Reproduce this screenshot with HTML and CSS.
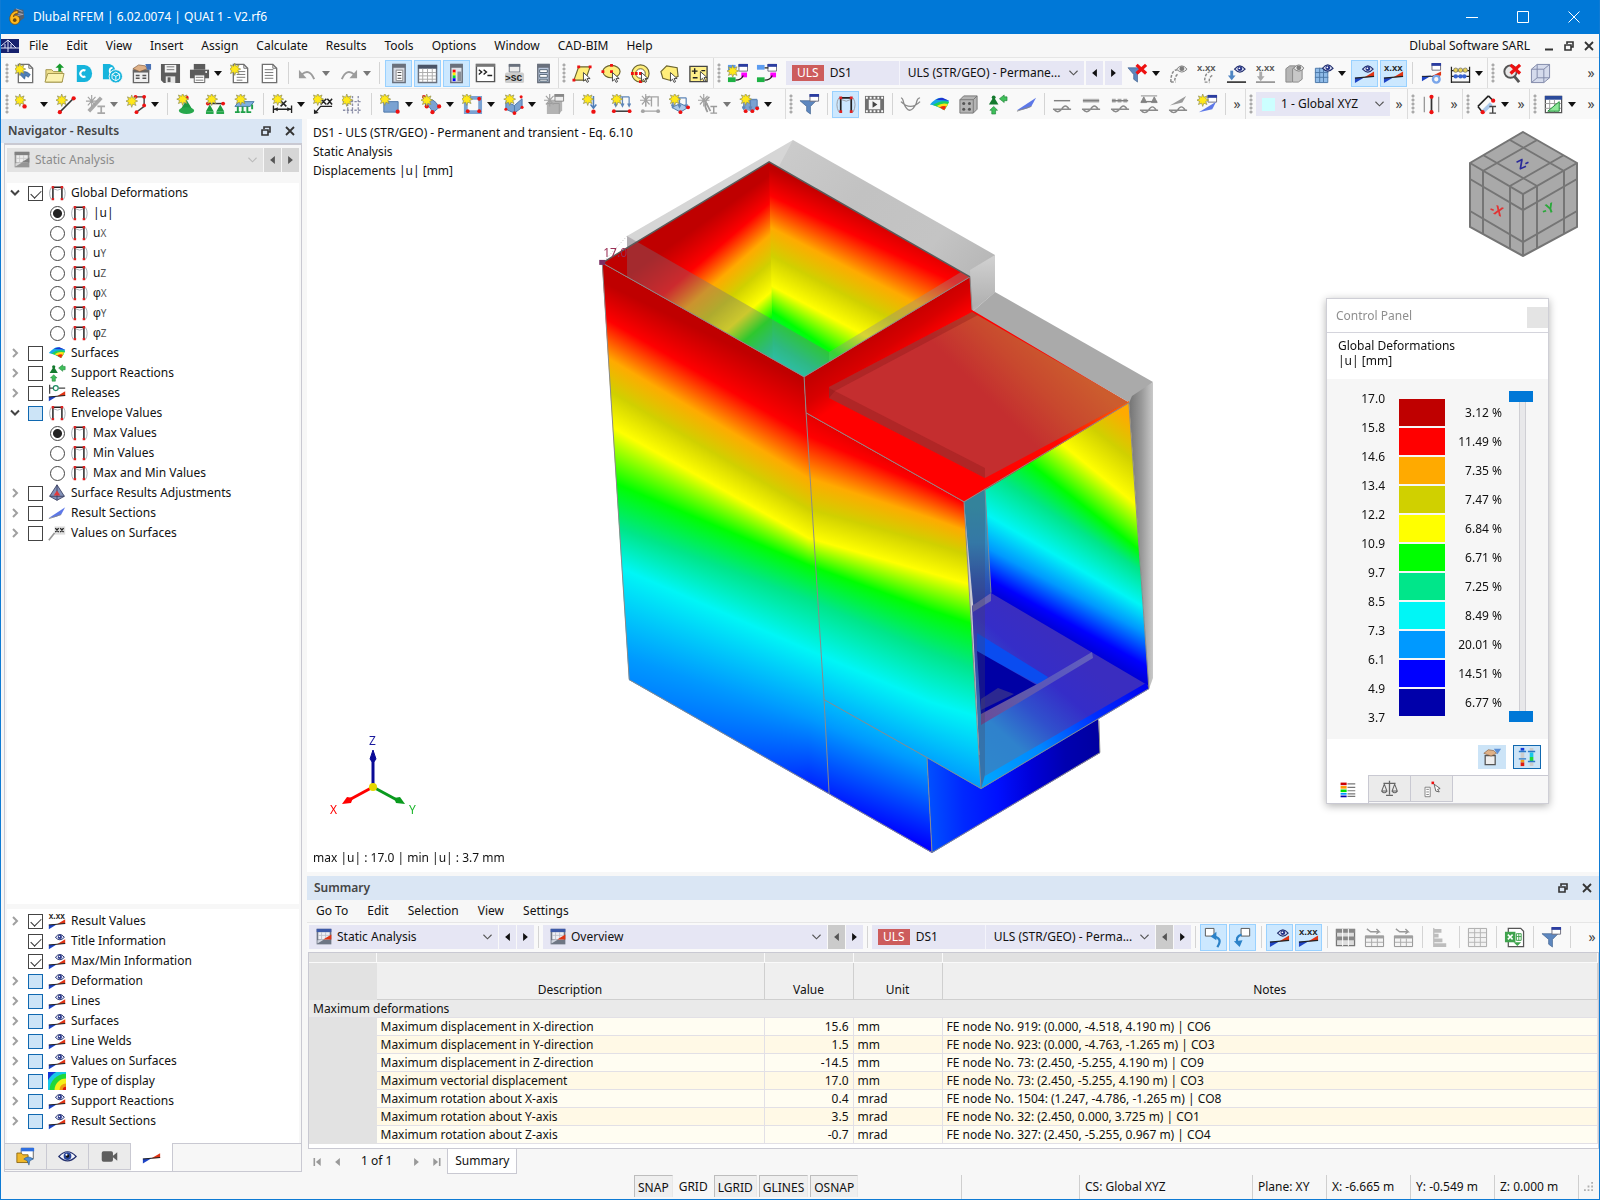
FILE: index.html
```html
<!DOCTYPE html>
<html lang="en">
<head>
<meta charset="utf-8">
<title>Dlubal RFEM | 6.02.0074 | QUAI 1 - V2.rf6</title>
<link rel="stylesheet" href="styles.css">
</head>
<body>
<svg class="defs" aria-hidden="true">
<defs>
<g id="star"><path d="M6 0l1.200 3.400L10.500 2 9.200 5l3 1.400-3 1.400 1.300 3.200-3.300-1.400L6 13 4.800 9.600 1.500 11l1.300-3.200-3-1.400 3-1.400L1.500 2l3.300 1.400z" fill="#ffe81a" stroke="#8d8b55" stroke-width=".7"/></g>
<g id="starg"><path d="M6 0v13M0 6.500h12M2 2l8 9M10 2l-8 9" stroke="#a2a2a2" stroke-width="1.200"/></g>
<g id="eye"><path d="M0 4.500Q5.500-2.500 11 4.500 5.500 10.500 0 4.500z" fill="#dfe3f6" stroke="#23306e" stroke-width="1.200"/><circle cx="5.500" cy="4" r="2.500" fill="#27358a"/><circle cx="5" cy="3.500" r=".9" fill="#fff"/></g>
<g id="eyeg"><path d="M0 4.500Q5.500-2.500 11 4.500 5.500 10.500 0 4.500z" fill="#e8e8e8" stroke="#808080"/><circle cx="5.500" cy="4" r="2.500" fill="#7d7d7d"/></g>
<g id="diag"><path d="M1 21v-5.500l10-.5z" fill="#1d43c4"/><path d="M21 9v5.500l-10 .5z" fill="#e03414"/><path d="M1 15.800L21 14" stroke="#222" stroke-width="1.300"/></g>
<g id="win"><path d="M.5.500h9v7h-9z" fill="#fff" stroke="#6f6f7f"/><path d="M0 0h10v3H0z" fill="#2b3da0"/></g>
<g id="wing"><path d="M.5.500h9v7h-9z" fill="#eee" stroke="#888"/><path d="M0 0h10v3H0z" fill="#888"/></g>
<g id="ptr"><path d="M0 0v9l2.200-2 1.600 3.300 1.600-.8-1.600-3.200H7z" fill="#fff" stroke="#333" stroke-width=".9"/></g>
<g id="wave"><path d="M2 8h17" stroke="#808080" stroke-width="1.500"/><path d="M1 17h19M2 17q4 5 8 0 4-7 8 0" fill="none" stroke="#8a8a8a" stroke-width="1.500"/></g>
<g id="page"><path d="M3.500 1.500h11l4 4v15h-15z" fill="#fff" stroke="#707070" stroke-width="1.400"/><path d="M14.500 1.500v4h4" fill="none" stroke="#707070"/></g>
<g id="arrows"><path d="M3 3v9M10 3v9M17 3v9M3 3h14M1.500 10L3 13l1.500-3M8.500 10L10 13l1.500-3M15.500 10l1.500 3 1.500-3" fill="none" stroke="#5f86b8" stroke-width="1.300"/></g>
</defs>
<symbol id="logo" viewBox="0 0 22 22"><path d="M8 2l10 1 1 9-8 6-7-6z" fill="#55606e"/><path d="M10 2l7 3M8 6l9 2M8 10l10-2" stroke="#aab" stroke-width="1"/><path d="M12 4C6 4 3 9 3 13c0 8 11 8 11 1 0-5-6-6-7-3 0-3 2-4 5-4z" fill="#ffb81c" stroke="#7a4a00" stroke-width=".8"/><circle cx="8.500" cy="14.500" r="2" fill="#6b4a10"/></symbol>
<symbol id="bridge" viewBox="0 0 18 14"><path d="M0 0h18v14H0z" fill="#16216e"/><path d="M0 9h18M7 1v12M0 7L7 1l8 8M4 9V5M10 9V5" stroke="#dfe4f7" stroke-width="1" fill="none"/></symbol>
<symbol id="newmodel" viewBox="0 0 22 22"><use href="#page"/><path d="M5 12q5-6 11 0l-2 3-3-2-1 4-3-3z" fill="#4f7fb8" stroke="#23507e" stroke-width=".6"/><use href="#star" x="-1" y="0"/></symbol>
<symbol id="open" viewBox="0 0 22 22"><path d="M2 20V7h6l2 2h9v11z" fill="#efe08e" stroke="#a4964a"/><path d="M1 20l3-9h17l-2 9z" fill="#fbf2b0" stroke="#a4964a"/><path d="M15 9V5h-3l4.500-4.500L21 5h-3v4z" fill="#179a2c"/></symbol>
<symbol id="dc" viewBox="0 0 22 22"><path d="M4 2h8a8 9 0 010 18H4z" fill="#16b4dc"/><path d="M13 8a3.500 3.500 0 100 6" fill="none" stroke="#fff" stroke-width="2.200"/></symbol>
<symbol id="dcg" viewBox="0 0 22 22"><path d="M1 1h7q6 2 6 8L8 17H1z" fill="#16b4dc"/><path d="M11 5a3 3 0 100 6" fill="none" stroke="#fff" stroke-width="1.800"/><circle cx="14.500" cy="14" r="7" fill="#16b4dc" stroke="#f7f7f7"/><path d="M14.500 9.500l4 2.300v4.500l-4 2.300-4-2.300v-4.500zM10.500 11.800l4 2.200 4-2.200M14.500 14v4.500" fill="none" stroke="#fff"/></symbol>
<symbol id="prefs" viewBox="0 0 22 22"><path d="M2.500 7.500h16v13h-16z" fill="#f0f0f0" stroke="#666" stroke-width="1.400"/><path d="M2 7h17v3H2z" fill="#666"/><path d="M5 13h4M5 16h4M12 13h4M12 16h4" stroke="#555" stroke-width="1.600"/><path d="M2 6l6-4 7 1 2 3-8 3z" fill="#dfb187" stroke="#80583a" stroke-width=".7"/><path d="M15 1h6v6h-4z" fill="#4a72b4"/></symbol>
<symbol id="save" viewBox="0 0 22 22"><path d="M1 1h20v20H4l-3-3z" fill="#5c5c5c"/><path d="M5 2h12v8H5z" fill="#f3f3f3"/><path d="M7 4h8M7 7h8" stroke="#777"/><path d="M6 14h10v7H6z" fill="#e6e6e6"/><path d="M8 15h3v5H8z" fill="#5c5c5c"/></symbol>
<symbol id="print" viewBox="0 0 22 22"><path d="M5 1h12v6H5z" fill="#5c5c5c"/><path d="M1 7h20v9H1z" fill="#5c5c5c"/><path d="M5.500 12.500h11v8h-11z" fill="#fff" stroke="#5c5c5c"/><path d="M7 15h8M7 18h8" stroke="#777"/><circle cx="18" cy="9.500" r="1" fill="#fff"/></symbol>
<symbol id="newrep" viewBox="0 0 22 22"><use href="#page"/><path d="M7 9h9M7 12h9M7 15h9M7 18h6" stroke="#777"/><use href="#star" x="-1" y="0"/></symbol>
<symbol id="doc" viewBox="0 0 22 22"><use href="#page"/><path d="M6 7h9M6 10h9M6 13h9M6 16h9" stroke="#777"/></symbol>
<symbol id="undo" viewBox="0 0 22 22"><path d="M5 12q8-7 13 5" fill="none" stroke="#9c9c9c" stroke-width="2"/><path d="M2 7v9h8z" fill="#9c9c9c"/></symbol>
<symbol id="redo" viewBox="0 0 22 22"><path d="M17 12Q9 5 4 17" fill="none" stroke="#9c9c9c" stroke-width="2"/><path d="M20 7v9h-8z" fill="#9c9c9c"/></symbol>
<symbol id="p1" viewBox="0 0 22 22"><path d="M5 1.500h13v19H5z" fill="#d5d9e2" stroke="#69707c" stroke-width="1.500"/><path d="M5 1h13v4H5z" fill="#69707c"/><path d="M8.500 7.500h7v11h-7z" fill="#fff" stroke="#888"/><path d="M10 10h4M10 13h4M10 16h4" stroke="#444"/></symbol>
<symbol id="p2" viewBox="0 0 22 22"><path d="M1.500 2.500h19v18h-19z" fill="#fff" stroke="#69707c" stroke-width="1.500"/><path d="M1 2h20v4H1z" fill="#4a5568"/><path d="M2 10h18M2 13.500h18M2 17h18M6 6v14M11 6v14M16 6v14" stroke="#aaa"/></symbol>
<symbol id="p3" viewBox="0 0 22 22"><path d="M5 1.500h12v19H5z" fill="#dfe3ea" stroke="#69707c" stroke-width="1.500"/><path d="M5 1h12v4H5z" fill="#69707c"/><path d="M7 7h3v3H7z" fill="#f00"/><path d="M7 10h3v3H7z" fill="#fe0"/><path d="M7 13h3v3H7z" fill="#0d3"/><path d="M7 16h3v3H7z" fill="#00f"/><path d="M12 9h4v10h-4z" fill="#8a8f98"/></symbol>
<symbol id="console" viewBox="0 0 22 22"><path d="M1.500 1.500h19v18h-19z" fill="#fff" stroke="#555" stroke-width="1.500"/><path d="M1 1h20v3H1z" fill="#777"/><path d="M4 7l3 2.500L4 12M9 7l3 2.500L9 12M13 13h5" fill="none" stroke="#222" stroke-width="1.500"/></symbol>
<symbol id="script" viewBox="0 0 22 22"><path d="M5.500 1.500h11v8h-11z" fill="#eee" stroke="#69707c"/><path d="M5 1h12v3H5z" fill="#69707c"/><rect x="1" y="10" width="20" height="11" rx="2" fill="#ccc"/><text x="1" y="19" font-family="Liberation Mono" font-weight="700" font-size="10" fill="#222">&gt;SC</text></symbol>
<symbol id="calcw" viewBox="0 0 22 22"><path d="M5 1.500h12v19H5z" fill="#b9c6dc" stroke="#69707c" stroke-width="1.500"/><path d="M5 1h12v4H5z" fill="#69707c"/><path d="M7 7h8v3H7zM7 12h8v3H7zM7 17h8v2H7z" fill="#fff" stroke="#567"/></symbol>
<symbol id="sel1" viewBox="0 0 22 22"><path d="M7 4h12l-5 14H2z" fill="#ffee7a" stroke="#6b6430" stroke-width="1.200"/><path d="M5.500 2.500h3v3h-3zM17.500 2.500h3v3h-3zM.5 16.500h3v3h-3z" fill="#e11"/><use href="#ptr" x="12" y="10"/></symbol>
<symbol id="sel2" viewBox="0 0 22 22"><ellipse cx="11" cy="9" rx="9" ry="6.500" fill="#ffee7a" stroke="#6b6430" stroke-width="1.200"/><path d="M9.500 1h3v3h-3zM.5 7.500h3v3h-3zM9.500 7.500h3v3h-3z" fill="#e11"/><use href="#ptr" x="12" y="10"/></symbol>
<symbol id="sel3" viewBox="0 0 22 22"><circle cx="11" cy="11" r="9" fill="#ffee7a" stroke="#6b6430" stroke-width="1.200"/><circle cx="11" cy="11" r="5" fill="#fff" stroke="#6b6430"/><path d="M1 9.500h3v3H1zM5 9.500h3v3H5zM9.500 9.500h3v3h-3zM9.500 18h3v3h-3z" fill="#e11"/><use href="#ptr" x="12" y="10"/></symbol>
<symbol id="sel4" viewBox="0 0 22 22"><path d="M2 9l6-6 11 2 1 9-9 4-7-2z" fill="#ffee7a" stroke="#6b6430" stroke-width="1.200"/><use href="#ptr" x="12" y="10"/></symbol>
<symbol id="sel5" viewBox="0 0 22 22"><path d="M2 3.500h18v16H2z" fill="#fff08a" stroke="#444" stroke-width="1.400"/><path d="M4 8.500h6M7 5.500v6M5 15.500h5M14 8h4" stroke="#222" stroke-width="1.500"/><use href="#ptr" x="13" y="9"/></symbol>
<symbol id="lc1" viewBox="0 0 22 22"><path d="M1 2h8v6H1z" fill="#5c9cf0"/><use href="#win" x="12" y="1"/><path d="M15 10h6v5h-6z" fill="#f0f"/><path d="M1 15h8v5H1z" fill="#1db244"/><path d="M9 18q6 0 8-5" fill="none" stroke="#222" stroke-width="1.300"/><use href="#star" x="0" y="2"/></symbol>
<symbol id="lc2" viewBox="0 0 22 22"><path d="M1 2h8v5H1z" fill="#5c9cf0"/><use href="#win" x="12" y="1"/><path d="M15 10h6v5h-6z" fill="#f0f"/><path d="M1 15h8v5H1z" fill="#1db244"/><path d="M9 18q6 0 8-5M9 5h4" fill="none" stroke="#222" stroke-width="1.300"/></symbol>
<symbol id="filtx" viewBox="0 0 22 22"><path d="M1 5h16l-6 7v8l-4-3v-5z" fill="#5d87bf" stroke="#42638f" stroke-width=".7"/><path d="M10 2l10 9M20 2l-10 9" stroke="#e11" stroke-width="3.400"/></symbol>
<symbol id="leye" viewBox="0 0 22 22"><path d="M10 7q-7 0-7 13M10 12q-3 2-3 8M3 20h5" fill="none" stroke="#8a8a8a" stroke-width="1.600" stroke-dasharray="3 1.500"/><use href="#eyeg" x="9" y="2"/></symbol>
<symbol id="lxx" viewBox="0 0 22 22"><text x="0" y="8" font-family="Liberation Sans" font-weight="700" font-size="10" fill="#555">x.xx</text><path d="M14 9q-6 1-6 11M16 13q-4 2-3 8M8 20h5" fill="none" stroke="#8a8a8a" stroke-width="1.500" stroke-dasharray="3 1.500"/></symbol>
<symbol id="seye" viewBox="0 0 22 22"><path d="M6 8v7" stroke="#4f86c4" stroke-width="3"/><path d="M2 13h8l-4 5z" fill="#4f86c4"/><path d="M1 20h20" stroke="#222" stroke-width="1.600"/><use href="#eye" x="9" y="2"/></symbol>
<symbol id="sxx" viewBox="0 0 22 22"><text x="1" y="8" font-family="Liberation Sans" font-weight="700" font-size="10" fill="#555">x.xx</text><path d="M6 9v6" stroke="#aaa" stroke-width="3"/><path d="M2 14h8l-4 5z" fill="#aaa"/><path d="M1 20h20" stroke="#888" stroke-width="1.600"/></symbol>
<symbol id="soleye" viewBox="0 0 22 22"><path d="M2 6l4-3h6v15l-4 2H2z" fill="#b5b5b5" stroke="#888"/><path d="M9 6l4-2h6v13l-4 3H9z" fill="#c8c8c8" stroke="#888"/><use href="#eyeg" x="10" y="1"/></symbol>
<symbol id="gridi" viewBox="0 0 22 22"><path d="M2.500 5.500h13v15h-13z" fill="#8fbbe8" stroke="#4c78a8"/><path d="M7 5v15M11 5v15M2 10h14M2 15h14" stroke="#4c78a8"/><use href="#eye" x="10" y="1"/></symbol>
<symbol id="reye" viewBox="0 0 22 22"><use href="#diag"/><use href="#eye" x="9" y="2"/></symbol>
<symbol id="rxx" viewBox="0 0 22 22"><use href="#diag"/><text x="1" y="8" font-family="Liberation Sans" font-weight="700" font-size="10" fill="#222">x.xx</text></symbol>
<symbol id="rset" viewBox="0 0 22 22"><path d="M1 19v-5l10-1z" fill="#1d43c4"/><path d="M21 9v4l-10 1z" fill="#e03414"/><path d="M1 14h19" stroke="#222"/><use href="#win" x="11" y="0"/><circle cx="16" cy="17" r="3.500" fill="none" stroke="#7aa6ea" stroke-width="2.500"/></symbol>
<symbol id="abacus" viewBox="0 0 22 22"><path d="M1.500 4v17M20.500 4v17M1 8h20M1 14h20M1 20h20" stroke="#222" stroke-width="1.300"/><g fill="#e8d25a" stroke="#555" stroke-width=".6"><circle cx="6" cy="7.500" r="2.300"/><circle cx="11" cy="7.500" r="2.300"/><circle cx="16" cy="7.500" r="2.300"/></g><g fill="#3a64d0"><circle cx="6" cy="14" r="2.300"/><circle cx="11" cy="14" r="2.300"/><circle cx="15" cy="14" r="2.300"/></g></symbol>
<symbol id="zoomx" viewBox="0 0 22 22"><circle cx="10" cy="9" r="6.500" fill="#e8e8e8" stroke="#555" stroke-width="2"/><path d="M14 14l5 6" stroke="#555" stroke-width="3"/><path d="M10 2l10 9M20 2l-10 9" stroke="#e11" stroke-width="3.400"/></symbol>
<symbol id="cubei" viewBox="0 0 22 22"><path d="M1.500 6.500l6-5h13v14l-6 5h-13z" fill="#d5dbec" stroke="#8088a8"/><path d="M1.500 6.500h13v14M14.500 6.500l6-5M7.500 1.500v14h13M7.500 15.500l-6 5" fill="none" stroke="#8088a8"/></symbol>
<symbol id="node" viewBox="0 0 22 22"><use href="#star" x="-1" y="0"/><circle cx="10" cy="13" r="2.300" fill="#e11"/></symbol>
<symbol id="line" viewBox="0 0 22 22"><path d="M4 19L19 4" stroke="#333" stroke-width="1.600"/><circle cx="4" cy="19" r="2.200" fill="#e11"/><circle cx="18.500" cy="4.500" r="2.200" fill="#e11"/><use href="#star" x="0" y="0"/></symbol>
<symbol id="member" viewBox="0 0 22 22"><path d="M4 18L17 4" stroke="#a8a8a8" stroke-width="4"/><path d="M13 13h8M13 20h8M17 13v7" stroke="#a8a8a8" stroke-width="1.800"/><use href="#starg" x="1" y="1"/></symbol>
<symbol id="poly" viewBox="0 0 22 22"><path d="M9 3h10v10l-8 6" fill="none" stroke="#444" stroke-width="1.500"/><g fill="#e11"><circle cx="10" cy="3" r="2"/><circle cx="19" cy="3" r="2"/><circle cx="19" cy="12" r="2"/><circle cx="11" cy="19" r="2"/></g><use href="#star" x="0" y="1"/></symbol>
<symbol id="nsup" viewBox="0 0 22 22"><path d="M11 6l6 10H5z" fill="#1c9a40"/><ellipse cx="11" cy="17.500" rx="8" ry="3.500" fill="#27a84c"/><circle cx="11" cy="4" r="2.300" fill="#e11"/><use href="#star" x="1" y="-1"/></symbol>
<symbol id="lsup" viewBox="0 0 22 22"><path d="M5 11l4 7H1zM16 11l4 7h-8z" fill="#1c9a40"/><path d="M1 19.500h8M12 19.500h8" stroke="#27a84c" stroke-width="3"/><path d="M2 10h17" stroke="#333" stroke-width="1.500"/><circle cx="3" cy="10" r="2" fill="#e11"/><circle cx="19" cy="10" r="2" fill="#e11"/><use href="#star" x="1" y="-1"/></symbol>
<symbol id="ssup" viewBox="0 0 22 22"><path d="M5 8h16l-4 5H1z" fill="#7fb0e0" stroke="#4878a8"/><path d="M4 13v5M9 13v5M14 13v5M19 11v5M1 19h5M7 19h5M13 19h5" stroke="#1fa048" stroke-width="2"/><use href="#star" x="1" y="-1"/></symbol>
<symbol id="dim" viewBox="0 0 22 22"><path d="M1.500 12v8M20.500 12v8M2 16h18" stroke="#222" stroke-width="1.400"/><path d="M2 16l4-2v4zM20 16l-4-2v4z" fill="#222"/><path d="M9 7l6 6M15 7l-6 6" stroke="#222" stroke-width="1.600"/><use href="#star" x="0" y="-1"/></symbol>
<symbol id="dimxx" viewBox="0 0 22 22"><path d="M20 13H8l-5 6" fill="none" stroke="#222" stroke-width="1.300"/><path d="M1 21v-5l5 4z" fill="#222"/><path d="M8 5l6 6M14 5l-6 6M15 5l5 6M20 5l-5 6" stroke="#222" stroke-width="1.600"/><use href="#star" x="-1" y="-1"/></symbol>
<symbol id="grid" viewBox="0 0 22 22"><path d="M1 8h20M1 17h20M6 2v20M17 2v20M11 2v20" stroke="#8c8fa8" stroke-width="1.400" stroke-dasharray="2.500 1.500"/><use href="#star" x="-1" y="0"/></symbol>
<symbol id="surf" viewBox="0 0 22 22"><path d="M4 8h15v11H4z" fill="#7aa2d2" stroke="#4d77aa"/><circle cx="18.500" cy="18.500" r="2.200" fill="#e11"/><use href="#star" x="-1" y="-1"/></symbol>
<symbol id="surfc" viewBox="0 0 22 22"><path d="M4 7q9-5 15 7l-7 6Q10 12 5 13z" fill="#7aa2d2" stroke="#4d77aa"/><g fill="#e11"><circle cx="19" cy="13" r="2.200"/><circle cx="12" cy="19" r="2.200"/><circle cx="6" cy="13" r="2.200"/><circle cx="3" cy="3" r="2"/></g><use href="#star" x="0" y="0"/></symbol>
<symbol id="opening" viewBox="0 0 22 22"><path d="M4 4h15v15H4z" fill="none" stroke="#7aa2d2" stroke-width="4"/><g fill="#e11"><circle cx="18" cy="5" r="2"/><circle cx="6" cy="18" r="2"/><circle cx="18" cy="18" r="2"/></g><use href="#star" x="-1" y="-1"/></symbol>
<symbol id="solid" viewBox="0 0 22 22"><path d="M3 8l9 4 8-7v9l-8 6-9-4z" fill="#7aa2d2" stroke="#4d77aa"/><path d="M12 12v8" stroke="#4d77aa"/><g fill="#e11"><circle cx="12" cy="20" r="2"/><circle cx="19" cy="3" r="1.600"/><circle cx="20" cy="14" r="1.600"/><circle cx="3" cy="16" r="1.600"/></g><use href="#star" x="1" y="-1"/></symbol>
<symbol id="block" viewBox="0 0 22 22"><path d="M3 10l3-3h13v10l-3 4H3z" fill="#b3b3b3"/><path d="M3 10h13v11" fill="none" stroke="#999"/><use href="#starg" x="0" y="0"/><use href="#wing" x="11" y="0"/></symbol>
<symbol id="ld1" viewBox="0 0 22 22"><path d="M12 2v12M9 11l3 4 3-4" fill="none" stroke="#4f7fb8" stroke-width="1.600"/><circle cx="12" cy="18.500" r="2.300" fill="#e11"/><use href="#star" x="0" y="-1"/></symbol>
<symbol id="ld2" viewBox="0 0 22 22"><use href="#arrows" x="2" y="0"/><path d="M2 18h18" stroke="#222" stroke-width="1.400"/><circle cx="3" cy="18" r="2" fill="#e11"/><circle cx="19.500" cy="18" r="2" fill="#e11"/><use href="#star" x="0" y="-1"/></symbol>
<symbol id="ld3" viewBox="0 0 22 22"><path d="M6 3h13v10M12 3v10M6 3v10M2 18h18" fill="none" stroke="#a4a4a4" stroke-width="1.400"/><circle cx="3" cy="18" r="2" fill="#a4a4a4"/><circle cx="19" cy="18" r="2" fill="#a4a4a4"/><use href="#starg"/></symbol>
<symbol id="ld4" viewBox="0 0 22 22"><path d="M3 14l9 5 8-5-8-4z" fill="#aac8ea" stroke="#4d77aa"/><use href="#arrows" x="1" y="1"/><g fill="#e11"><circle cx="12" cy="19" r="2"/><circle cx="20" cy="14" r="2"/></g><use href="#star" x="0" y="-1"/></symbol>
<symbol id="ld5" viewBox="0 0 22 22"><path d="M12 3q-8 5-2 16M8 8l5 10" fill="none" stroke="#9a9a9a" stroke-width="1.800"/><path d="M13 13h7M13 20h7M16.500 13v7" stroke="#9a9a9a" stroke-width="1.500"/><use href="#starg"/></symbol>
<symbol id="ld6" viewBox="0 0 22 22"><path d="M3 15l6-10h10v8l-4 6z" fill="#7aa2d2"/><use href="#arrows" x="2" y="3"/><g fill="#e11"><circle cx="7" cy="18" r="2"/><circle cx="14" cy="18" r="2"/><circle cx="19" cy="15" r="2"/></g><use href="#star" x="1" y="-1"/></symbol>
<symbol id="filter" viewBox="0 0 22 22"><path d="M1 7h17l-6 6v8l-4-3v-5z" fill="#5d87bf" stroke="#42638f" stroke-width=".7"/><use href="#win" x="11" y="0"/></symbol>
<symbol id="frame" viewBox="0 0 22 22"><path d="M6 19V4h11v15" fill="none" stroke="#222" stroke-width="1.800"/><path d="M4 4q-4 7 0 15M19 4q4 7 0 15M7 6q5 3 9 0" fill="none" stroke="#9aa0a8"/><path d="M4.500 2.500h3v3h-3zM15.500 2.500h3v3h-3zM4.500 17h3v3h-3zM15.500 17h3v3h-3z" fill="#d22"/></symbol>
<symbol id="film" viewBox="0 0 22 22"><path d="M1 2h20v18H1z" fill="#707070"/><path d="M5 6h12v10H5z" fill="#f4f4f4"/><path d="M9 7.500v7l5-3.500z" fill="#444"/><path d="M2 4h18M2 18h18" stroke="#fff" stroke-width="2" stroke-dasharray="2 2"/></symbol>
<symbol id="parab" viewBox="0 0 22 22"><path d="M1 4q2 0 3 6 6 14 13 0 1-6 4-6M1 8q10 10 20 0" fill="none" stroke="#8a8a8a" stroke-width="1.400"/></symbol>
<symbol id="surfcol" viewBox="0 0 22 22"><path d="M1 11Q8 3 13 4l8 3q-2 6-5 10Q8 12 1 11z" fill="#16a7e8"/><path d="M4 11.500q9-6 17-3-2 5-5 8.500Q8 12.500 4 11.500z" fill="#1fd05a"/><path d="M8 12.500q6-4 12-2l-4 6.500q-4-3-8-4.500z" fill="#ffe21a"/><path d="M11 14q4-2 7-1l-2 4z" fill="#f02a10"/><path d="M7 6q4-2 7-2l7 3-6-.5z" fill="#1d34d0"/></symbol>
<symbol id="dice" viewBox="0 0 22 22"><path d="M2 6l4-4h14v14l-4 4H2z" fill="#b4b4b4" stroke="#777"/><path d="M2 6h14v14M16 6l4-4" fill="none" stroke="#777"/><g fill="#555"><circle cx="6" cy="10" r="1.600"/><circle cx="12" cy="10" r="1.600"/><circle cx="6" cy="16" r="1.600"/><circle cx="12" cy="16" r="1.600"/></g></symbol>
<symbol id="react" viewBox="0 0 22 22"><path d="M7 3l5 8H2z" fill="#157a2e"/><circle cx="7" cy="3.500" r="2" fill="#157a2e"/><path d="M5 21v-4H3l4-4 4 4H9v4zM21 3h-3V1l-5 4 5 4V7h3z" fill="#3fbf5a" stroke="#157a2e" stroke-width=".6"/></symbol>
<symbol id="sect" viewBox="0 0 22 22"><path d="M1 17L21 4l-5 9q-7 4-15 4z" fill="#5d78e8"/><path d="M1 18l15-5" stroke="#888"/></symbol>
<symbol id="cut1" viewBox="0 0 22 22"><use href="#wave" y="-1"/></symbol>
<symbol id="cut2" viewBox="0 0 22 22"><path d="M2 7h17" stroke="#b9b9b9" stroke-width="4"/><use href="#wave" y="-1"/></symbol>
<symbol id="cut3" viewBox="0 0 22 22"><path d="M2 7h17" stroke="#aaa" stroke-width="4" stroke-dasharray="4 2"/><use href="#wave" y="-1"/></symbol>
<symbol id="cut4" viewBox="0 0 22 22"><path d="M2 2h17M5 3l3 6H2zM16 3l3 6h-6z" fill="#888" stroke="#888"/><use href="#wave"/></symbol>
<symbol id="cut5" viewBox="0 0 22 22"><path d="M2 12L19 2l-4 7z" fill="#9a9a9a"/><path d="M1 17h19M2 17q4 5 8 0 4-7 8 0" fill="none" stroke="#8a8a8a" stroke-width="1.500"/></symbol>
<symbol id="cutwin" viewBox="0 0 22 22"><use href="#win" x="11" y="1"/><path d="M2 19L20 8l-4 8z" fill="#5d78e8"/><use href="#star" x="0" y="0"/></symbol>
<symbol id="axisline" viewBox="0 0 22 22"><path d="M3.500 3v16M18.500 3v16" stroke="#999" stroke-width="1.400"/><path d="M11 3v16" stroke="#333" stroke-width="1.800"/><circle cx="11" cy="3" r="2.200" fill="#e11"/><circle cx="11" cy="19" r="2.200" fill="#e11"/></symbol>
<symbol id="tape" viewBox="0 0 22 22"><path d="M2 13L13 2M2 13l4 5M13 2l5 5" stroke="#222" stroke-width="1.600" fill="none"/><path d="M8 18l8-8" stroke="#aac8ea" stroke-width="4"/><circle cx="18" cy="7" r="2.200" fill="#e11"/><circle cx="7" cy="19" r="2.200" fill="#e11"/><path d="M14 13h7M14 20h7M17.500 13v7" stroke="#444" stroke-width="1.500"/></symbol>
<symbol id="chart" viewBox="0 0 22 22"><path d="M2.500 2.500h17v17h-17z" fill="#fff" stroke="#555" stroke-width="1.300"/><path d="M2 2h18v4H2z" fill="#2b4a9a"/><path d="M7 6v13M12 6v13M2 10h17M2 15h17" stroke="#999"/><path d="M5 18L17 8v10z" fill="#8ee89a" stroke="#1b8a34"/></symbol>
<symbol id="static" viewBox="0 0 22 22"><path d="M2 1h18v19H2z" fill="#6e7684"/><path d="M4 5h14v9H4z" fill="#eef0f6"/><path d="M2 1h18v4H2z" fill="#3d5aa8"/><path d="M8 5v9M13 5v9M4 9h14" stroke="#b8bcc8"/><path d="M3 19v-4l8-1z" fill="#cfd4de"/><path d="M10 14l10-6v6z" fill="#e03414"/></symbol>
<symbol id="rel" viewBox="0 0 22 22"><path d="M2 1v11M2 5h6M13 5h8" stroke="#444" stroke-width="1.500"/><circle cx="9.500" cy="5" r="3" fill="#fff" stroke="#1b8a60" stroke-width="1.500"/><use href="#diag"/></symbol>
<symbol id="adj" viewBox="0 0 22 22"><path d="M11 1l9 14-9 5-9-5z" fill="#8492b8" stroke="#333a5c"/><path d="M11 1v19M2 15h18" stroke="#333a5c"/><path d="M11 8l4 6H7z" fill="#e23a3a"/></symbol>
<symbol id="vals" viewBox="0 0 22 22"><path d="M8 3h13v10H8z" fill="#ddd"/><path d="M1 20l7-9" stroke="#999" stroke-width="2"/><path d="M9 5l4 5M13 5L9 10M15 5l4 5M19 5l-4 5" stroke="#222" stroke-width="1.600"/></symbol>
<symbol id="iso" viewBox="0 0 22 22"><path d="M0 0h22v22H0z" fill="#1438d8"/><circle cx="22" cy="22" r="25" fill="#18c8e8"/><circle cx="22" cy="22" r="20" fill="#1fd83a"/><circle cx="22" cy="22" r="14" fill="#f4f01a"/><circle cx="22" cy="22" r="8" fill="#f09a10"/><circle cx="22" cy="22" r="4" fill="#e01a10"/></symbol>
<symbol id="navdata" viewBox="0 0 22 22"><path d="M6 1.500h14v12H6z" fill="#fff" stroke="#555"/><path d="M6 1h15v4H6z" fill="#2f6fe0"/><path d="M1 7h5l2 2h6v9H1z" fill="#f0b82a" stroke="#8a6410"/><path d="M9 14q5-5 11 0l-4 2-1 5-2-5z" fill="#4f8fd8" stroke="#23507e" stroke-width=".6"/></symbol>
<symbol id="bigeye" viewBox="0 0 22 22"><path d="M1 11Q11 0 21 11 11 21 1 11z" fill="#f2f4fc" stroke="#23306e" stroke-width="1.400"/><circle cx="11" cy="10.500" r="4.500" fill="#27459a"/><circle cx="11" cy="10.500" r="2" fill="#111"/><circle cx="9.800" cy="9" r="1.200" fill="#fff"/></symbol>
<symbol id="cam" viewBox="0 0 22 22"><rect x="2" y="5" width="13" height="12" rx="2" fill="#5e5e5e"/><path d="M15 10l5-4v10l-5-4z" fill="#5e5e5e"/></symbol>
<symbol id="wedge" viewBox="0 0 22 22"><use href="#diag" y="-3"/></symbol>
<symbol id="sync1" viewBox="0 0 22 22"><path d="M2.500 1.500h9v8h-9z" fill="#fff" stroke="#555"/><path d="M15 21q6-9-3-11" fill="none" stroke="#2c82c8" stroke-width="2.400"/><path d="M8 10l6-5v9z" fill="#2c82c8"/></symbol>
<symbol id="sync2" viewBox="0 0 22 22"><path d="M9.500 1.500h9v8h-9z" fill="#fff" stroke="#555"/><path d="M10 8q-7 2-4 9" fill="none" stroke="#2c82c8" stroke-width="2.400"/><path d="M2 15l9-1-3 7z" fill="#2c82c8"/></symbol>
<symbol id="tbl1" viewBox="0 0 22 22"><path d="M1.500 2.500h19v17h-19z" fill="#ddd" stroke="#777" stroke-width="1.300"/><path d="M1 2h20v4H1zM1 10h20v4H1z" fill="#888"/><path d="M8 2v18M14 2v18" stroke="#fff"/></symbol>
<symbol id="tbl2" viewBox="0 0 22 22"><path d="M1.500 9.500h19v11h-19z" fill="#f4f4f4" stroke="#909090"/><path d="M1 9h20v3H1z" fill="#a0a0a0"/><path d="M8 12v8M14 12v8M2 16h18" stroke="#aaa"/><path d="M3 2l4 3h9l-3-3m3 3l-3 2" fill="none" stroke="#999" stroke-width="1.400"/></symbol>
<symbol id="bars" viewBox="0 0 22 22"><path d="M4 1v20" stroke="#aaa"/><path d="M4 2h8v4H4zM4 7h5v4H4zM4 12h9v4H4zM4 17h13v4H4z" fill="#bdbdbd"/></symbol>
<symbol id="tbl3" viewBox="0 0 22 22"><path d="M1.500 1.500h19v19h-19z" fill="#f2f2f2" stroke="#a8a8a8"/><path d="M8 1v19M14 1v19M1 6h19M1 11h19M1 16h19" stroke="#b4b4b4"/></symbol>
<symbol id="xls" viewBox="0 0 22 22"><path d="M4.500 1.500h13l3 3v16h-16z" fill="#fff" stroke="#555" stroke-width="1.300"/><path d="M1 5h11v11H1z" fill="#3fa34d"/><path d="M4 8l5 5M9 8l-5 5" stroke="#fff" stroke-width="1.600"/><path d="M13 7h5v7h-5zM15.500 7v7M13 10h5" fill="none" stroke="#3fa34d"/><path d="M10 16h8l-4 4z" fill="#3fa34d"/></symbol>
<symbol id="cpset" viewBox="0 0 22 22"><path d="M3.500 9.500h11v10h-11z" fill="#eee" stroke="#555" stroke-width="1.400"/><path d="M2 7l5-4 6 1 3 3-6 3z" fill="#dfb187" stroke="#80583a" stroke-width=".7"/><path d="M13 2h8l-4 6z" fill="#5b8fd6"/></symbol>
<symbol id="cprange" viewBox="0 0 22 22"><path d="M4 1h4v3H4z" fill="#1438d8"/><path d="M4 6h4v6H4z" fill="#ccc"/><path d="M4 14h4v3H4z" fill="#f0a020"/><path d="M4 17h4v4H4z" fill="#e01a10"/><path d="M14 1h4v4h-4zM14 17h4v4h-4z" fill="#ccc"/><path d="M14 6h4v5h-4z" fill="#18c8e8"/><path d="M14 11h4v5h-4z" fill="#1fd83a"/><path d="M2 5h8M2 13h8M12 5h8M12 16h8" stroke="#2b78c8" stroke-width="1.500"/></symbol>
<symbol id="legend" viewBox="0 0 22 22"><path d="M3 3h7v3H3z" fill="#c00"/><path d="M3 7h7v3H3z" fill="#f90"/><path d="M3 11h7v3H3z" fill="#0d0"/><path d="M3 15h7v2H3z" fill="#09f"/><path d="M3 18h7v2H3z" fill="#00a"/><path d="M11 4.500h9M11 8.500h9M11 12.500h9M11 16h9M11 19h9" stroke="#777" stroke-width="1.300"/></symbol>
<symbol id="scales" viewBox="0 0 22 22"><path d="M11 2v16M4 5h14M7 19h8" stroke="#666" stroke-width="1.500"/><path d="M5 6l-3 8h6zM17 6l-3 8h6zM2 14q3 4 6 0M14 14q3 4 6 0" fill="none" stroke="#666" stroke-width="1.200"/></symbol>
<symbol id="probe" viewBox="0 0 22 22"><path d="M3.500 9.500h6v11h-6z" fill="#fff" stroke="#777"/><path d="M5 12h3M5 15h3M5 18h3" stroke="#777"/><path d="M11 3h3v3h-3z" fill="#e11"/><path d="M14 6l7 5-3 1 2 3-4-1z" fill="#fff" stroke="#555"/></symbol>
<symbol id="dn" viewBox="0 0 10 6"><path d="M0 0h10L5 6z" fill="currentColor"/></symbol>
<symbol id="lt" viewBox="0 0 6 10"><path d="M6 0v10L0 5z" fill="currentColor"/></symbol>
<symbol id="rt" viewBox="0 0 6 10"><path d="M0 0v10l6-5z" fill="currentColor"/></symbol>
<symbol id="first" viewBox="0 0 10 10"><path d="M1 0v10" stroke="currentColor" stroke-width="2"/><path d="M9 0v10L3 5z" fill="currentColor"/></symbol>
<symbol id="last" viewBox="0 0 10 10"><path d="M9 0v10" stroke="currentColor" stroke-width="2"/><path d="M1 0v10l6-5z" fill="currentColor"/></symbol>
<symbol id="chev" viewBox="0 0 10 6"><path d="M.5.500L5 5 9.500.500" fill="none" stroke="currentColor" stroke-width="1.200"/></symbol>
<symbol id="opn" viewBox="0 0 10 10"><path d="M1 2.500l4 4 4-4" fill="none" stroke="#444" stroke-width="2"/></symbol>
<symbol id="cls" viewBox="0 0 10 10"><path d="M3 1l4 4-4 4" fill="none" stroke="#a0a0a0" stroke-width="2"/></symbol>
<symbol id="restore" viewBox="0 0 10 10"><path d="M3 3V1h6v5H7" fill="none" stroke="#333" stroke-width="1.600"/><path d="M1 4h6v5H1z" fill="none" stroke="#333" stroke-width="1.600"/></symbol>
<symbol id="x" viewBox="0 0 10 10"><path d="M1 1l8 8M9 1L1 9" stroke="#333" stroke-width="1.800"/></symbol>
</svg>

<div class="app">
<header class="titlebar">
  <svg class="app-logo"><use href="#logo"/></svg>
  <h1>Dlubal RFEM | 6.02.0074 | QUAI 1 - V2.rf6</h1>
  <button class="wbtn" aria-label="Minimize"><svg viewBox="0 0 12 12"><path d="M0 6.500h12" stroke="#fff"/></svg></button>
  <button class="wbtn" aria-label="Maximize"><svg viewBox="0 0 12 12"><path d="M.5.500h11v11H.5z" fill="none" stroke="#fff"/></svg></button>
  <button class="wbtn" aria-label="Close"><svg viewBox="0 0 12 12"><path d="M.5.500l11 11M11.500.500l-11 11" stroke="#fff"/></svg></button>
</header>

<nav class="menubar">
  <svg class="bridge"><use href="#bridge"/></svg>
  <button>File</button><button>Edit</button><button>View</button><button>Insert</button><button>Assign</button><button>Calculate</button><button>Results</button><button>Tools</button><button>Options</button><button>Window</button><button>CAD-BIM</button><button>Help</button>
  <span class="company">Dlubal Software SARL</span>
  <button class="mini" aria-label="Minimize document"><svg viewBox="0 0 10 10"><path d="M1 8.500h8" stroke="#333" stroke-width="2"/></svg></button>
  <button class="mini" aria-label="Restore document"><svg><use href="#restore"/></svg></button>
  <button class="mini" aria-label="Close document"><svg><use href="#x"/></svg></button>
</nav>

<div class="bar">
  <div class="grp"><i class="grip"></i>
    <button class="tb" aria-label="New model"><svg><use href="#newmodel"/></svg></button>
    <button class="tb" aria-label="Open"><svg><use href="#open"/></svg></button>
    <button class="tb" aria-label="Dlubal Center"><svg><use href="#dc"/></svg></button>
    <button class="tb" aria-label="Cloud"><svg><use href="#dcg"/></svg></button>
    <button class="tb" aria-label="Base data"><svg><use href="#prefs"/></svg></button>
    <button class="tb" aria-label="Save"><svg><use href="#save"/></svg></button>
    <button class="tb" aria-label="Print"><svg><use href="#print"/></svg></button>
    <button class="dd" aria-label="Print options"><svg><use href="#dn"/></svg></button>
    <button class="tb" aria-label="New report"><svg><use href="#newrep"/></svg></button>
    <button class="tb" aria-label="Report"><svg><use href="#doc"/></svg></button>
    <i class="sep"></i>
    <button class="tb" aria-label="Undo"><svg><use href="#undo"/></svg></button>
    <button class="dd dim" aria-label="Undo list"><svg><use href="#dn"/></svg></button>
    <button class="tb" aria-label="Redo"><svg><use href="#redo"/></svg></button>
    <button class="dd dim" aria-label="Redo list"><svg><use href="#dn"/></svg></button>
    <i class="sep"></i>
    <button class="tb on" aria-label="Navigator"><svg><use href="#p1"/></svg></button>
    <button class="tb on" aria-label="Tables"><svg><use href="#p2"/></svg></button>
    <button class="tb on" aria-label="Control panel"><svg><use href="#p3"/></svg></button>
    <button class="tb" aria-label="Console"><svg><use href="#console"/></svg></button>
    <button class="tb" aria-label="Scripts"><svg><use href="#script"/></svg></button>
    <button class="tb" aria-label="Calculator"><svg><use href="#calcw"/></svg></button>
  </div>
  <div class="grp"><i class="grip"></i>
    <button class="tb" aria-label="Select by rhomboid"><svg><use href="#sel1"/></svg></button>
    <button class="tb" aria-label="Select by ellipse"><svg><use href="#sel2"/></svg></button>
    <button class="tb" aria-label="Select by annulus"><svg><use href="#sel3"/></svg></button>
    <button class="tb" aria-label="Select by polygon"><svg><use href="#sel4"/></svg></button>
    <button class="tb" aria-label="Add or remove selection"><svg><use href="#sel5"/></svg></button>
  </div>
  <div class="grp"><i class="grip"></i>
    <button class="tb" aria-label="New load case"><svg><use href="#lc1"/></svg></button>
    <button class="tb" aria-label="Load cases"><svg><use href="#lc2"/></svg></button>
    <div class="combo ds"><span class="uls">ULS</span><span class="ds1">DS1</span><select aria-label="Design situation"><option>ULS (STR/GEO) - Permane...</option></select><svg class="chev"><use href="#chev"/></svg></div>
    <button class="step" aria-label="Previous"><svg><use href="#lt"/></svg></button>
    <button class="step" aria-label="Next"><svg><use href="#rt"/></svg></button>
    <button class="tb" aria-label="Clear filter"><svg><use href="#filtx"/></svg></button>
    <button class="dd" aria-label="Filter options"><svg><use href="#dn"/></svg></button>
    <button class="tb" aria-label="Show loads"><svg><use href="#leye"/></svg></button>
    <button class="tb" aria-label="Load values"><svg><use href="#lxx"/></svg></button>
    <button class="tb" aria-label="Show supports"><svg><use href="#seye"/></svg></button>
    <button class="tb" aria-label="Support values"><svg><use href="#sxx"/></svg></button>
    <button class="tb" aria-label="Show solids"><svg><use href="#soleye"/></svg></button>
    <button class="tb" aria-label="Show mesh"><svg><use href="#gridi"/></svg></button>
    <button class="dd" aria-label="Mesh options"><svg><use href="#dn"/></svg></button>
    <button class="tb on" aria-label="Show results"><svg><use href="#reye"/></svg></button>
    <button class="tb on" aria-label="Result values"><svg><use href="#rxx"/></svg></button>
    <i class="sep"></i>
    <button class="tb" aria-label="Result settings"><svg><use href="#rset"/></svg></button>
    <button class="tb" aria-label="Calculate"><svg><use href="#abacus"/></svg></button>
    <button class="dd" aria-label="Calculation options"><svg><use href="#dn"/></svg></button>
  </div>
  <div class="grp last"><i class="grip"></i>
    <button class="tb" aria-label="Reset zoom"><svg><use href="#zoomx"/></svg></button>
    <button class="tb" aria-label="Isometric view"><svg><use href="#cubei"/></svg></button>
    <button class="more" aria-label="More">»</button>
  </div>
</div>

<div class="bar">
  <div class="grp wide"><i class="grip"></i>
    <button class="tb" aria-label="Node"><svg><use href="#node"/></svg></button>
    <button class="dd" aria-label="Node types"><svg><use href="#dn"/></svg></button>
    <button class="tb" aria-label="Line"><svg><use href="#line"/></svg></button>
    <button class="tb" aria-label="Member"><svg><use href="#member"/></svg></button>
    <button class="dd dim" aria-label="Member types"><svg><use href="#dn"/></svg></button>
    <button class="tb" aria-label="Polyline"><svg><use href="#poly"/></svg></button>
    <button class="dd" aria-label="Line types"><svg><use href="#dn"/></svg></button>
    <i class="sep"></i>
    <button class="tb" aria-label="Nodal support"><svg><use href="#nsup"/></svg></button>
    <button class="tb" aria-label="Line support"><svg><use href="#lsup"/></svg></button>
    <button class="tb" aria-label="Surface support"><svg><use href="#ssup"/></svg></button>
    <i class="sep"></i>
    <button class="tb" aria-label="Dimension"><svg><use href="#dim"/></svg></button>
    <button class="dd" aria-label="Dimension types"><svg><use href="#dn"/></svg></button>
    <button class="tb" aria-label="Note"><svg><use href="#dimxx"/></svg></button>
    <button class="tb" aria-label="Guidelines"><svg><use href="#grid"/></svg></button>
    <i class="sep"></i>
    <button class="tb" aria-label="Surface"><svg><use href="#surf"/></svg></button>
    <button class="dd" aria-label="Surface types"><svg><use href="#dn"/></svg></button>
    <button class="tb" aria-label="Curved surface"><svg><use href="#surfc"/></svg></button>
    <button class="dd" aria-label="Curved surface types"><svg><use href="#dn"/></svg></button>
    <button class="tb" aria-label="Opening"><svg><use href="#opening"/></svg></button>
    <button class="dd" aria-label="Opening types"><svg><use href="#dn"/></svg></button>
    <button class="tb" aria-label="Solid"><svg><use href="#solid"/></svg></button>
    <button class="dd" aria-label="Solid types"><svg><use href="#dn"/></svg></button>
    <button class="tb" aria-label="Block"><svg><use href="#block"/></svg></button>
    <i class="sep"></i>
    <button class="tb" aria-label="Nodal load"><svg><use href="#ld1"/></svg></button>
    <button class="tb" aria-label="Member load"><svg><use href="#ld2"/></svg></button>
    <button class="tb" aria-label="Line load"><svg><use href="#ld3"/></svg></button>
    <button class="tb" aria-label="Surface load"><svg><use href="#ld4"/></svg></button>
    <button class="tb" aria-label="Imperfection"><svg><use href="#ld5"/></svg></button>
    <button class="dd dim" aria-label="Imperfection types"><svg><use href="#dn"/></svg></button>
    <button class="tb" aria-label="Solid load"><svg><use href="#ld6"/></svg></button>
    <button class="dd" aria-label="Solid load types"><svg><use href="#dn"/></svg></button>
  </div>
  <div class="grp tight"><i class="grip"></i>
    <button class="tb" aria-label="Result filter"><svg><use href="#filter"/></svg></button>
    <i class="sep"></i>
    <button class="tb on" aria-label="Deformations"><svg><use href="#frame"/></svg></button>
    <button class="tb" aria-label="Animation"><svg><use href="#film"/></svg></button>
    <i class="sep"></i>
    <button class="tb" aria-label="Member results"><svg><use href="#parab"/></svg></button>
    <button class="tb" aria-label="Surface results"><svg><use href="#surfcol"/></svg></button>
    <button class="tb" aria-label="Solid results"><svg><use href="#dice"/></svg></button>
    <button class="tb" aria-label="Support reactions"><svg><use href="#react"/></svg></button>
    <button class="tb" aria-label="Result sections"><svg><use href="#sect"/></svg></button>
    <i class="sep"></i>
    <button class="tb" aria-label="Line diagram"><svg><use href="#cut1"/></svg></button>
    <button class="tb" aria-label="Member diagram"><svg><use href="#cut2"/></svg></button>
    <button class="tb" aria-label="Member set diagram"><svg><use href="#cut3"/></svg></button>
    <button class="tb" aria-label="Line support diagram"><svg><use href="#cut4"/></svg></button>
    <button class="tb" aria-label="Section diagram"><svg><use href="#cut5"/></svg></button>
    <button class="tb" aria-label="New section"><svg><use href="#cutwin"/></svg></button>
    <i class="sep"></i>
    <button class="more" aria-label="More results">»</button>
  </div>
  <div class="grp"><i class="grip"></i>
    <div class="combo cs"><i class="swatch"></i><select aria-label="Coordinate system"><option>1 - Global XYZ</option></select><svg class="chev"><use href="#chev"/></svg></div>
    <button class="more" aria-label="More coordinate systems">»</button>
  </div>
  <div class="grp"><i class="grip"></i>
    <button class="tb" aria-label="Axis line"><svg><use href="#axisline"/></svg></button>
    <button class="more" aria-label="More axes">»</button>
  </div>
  <div class="grp"><i class="grip"></i>
    <button class="tb" aria-label="Measure"><svg><use href="#tape"/></svg></button>
    <button class="dd" aria-label="Measure options"><svg><use href="#dn"/></svg></button>
    <button class="more" aria-label="More measuring">»</button>
  </div>
  <div class="grp last"><i class="grip"></i>
    <button class="tb" aria-label="Table view"><svg><use href="#chart"/></svg></button>
    <button class="dd" aria-label="Table view options"><svg><use href="#dn"/></svg></button>
    <button class="more" aria-label="More tables">»</button>
  </div>
</div>

<div class="work">
<aside class="navigator">
  <div class="phead"><h2>Navigator - Results</h2><button class="mini" aria-label="Float navigator"><svg><use href="#restore"/></svg></button><button class="mini" aria-label="Close navigator"><svg><use href="#x"/></svg></button></div>
  <div class="navbody">
    <div class="navsel">
      <div class="combo off"><svg class="ci"><use href="#static"/></svg><select aria-label="Analysis type" disabled><option>Static Analysis</option></select><svg class="chev"><use href="#chev"/></svg></div>
      <button class="step" aria-label="Previous analysis"><svg><use href="#lt"/></svg></button><button class="step" aria-label="Next analysis"><svg><use href="#rt"/></svg></button>
    </div>
    <ul class="tree main-tree">
      <li><svg class="tw"><use href="#opn"/></svg><label><input type="checkbox" checked><svg class="ti"><use href="#frame"/></svg>Global Deformations</label></li>
      <li class="sub"><label><input type="radio" name="def" checked><svg class="ti"><use href="#frame"/></svg>|u|</label></li>
      <li class="sub"><label><input type="radio" name="def"><svg class="ti"><use href="#frame"/></svg><span>u<sub>X</sub></span></label></li>
      <li class="sub"><label><input type="radio" name="def"><svg class="ti"><use href="#frame"/></svg><span>u<sub>Y</sub></span></label></li>
      <li class="sub"><label><input type="radio" name="def"><svg class="ti"><use href="#frame"/></svg><span>u<sub>Z</sub></span></label></li>
      <li class="sub"><label><input type="radio" name="def"><svg class="ti"><use href="#frame"/></svg><span><b class="phi">φ</b><sub>X</sub></span></label></li>
      <li class="sub"><label><input type="radio" name="def"><svg class="ti"><use href="#frame"/></svg><span><b class="phi">φ</b><sub>Y</sub></span></label></li>
      <li class="sub"><label><input type="radio" name="def"><svg class="ti"><use href="#frame"/></svg><span><b class="phi">φ</b><sub>Z</sub></span></label></li>
      <li><svg class="tw"><use href="#cls"/></svg><label><input type="checkbox"><svg class="ti"><use href="#surfcol"/></svg>Surfaces</label></li>
      <li><svg class="tw"><use href="#cls"/></svg><label><input type="checkbox"><svg class="ti"><use href="#react"/></svg>Support Reactions</label></li>
      <li><svg class="tw"><use href="#cls"/></svg><label><input type="checkbox"><svg class="ti"><use href="#rel"/></svg>Releases</label></li>
      <li><svg class="tw"><use href="#opn"/></svg><label><input type="checkbox" class="part"><svg class="ti"><use href="#frame"/></svg>Envelope Values</label></li>
      <li class="sub"><label><input type="radio" name="env" checked><svg class="ti"><use href="#frame"/></svg>Max Values</label></li>
      <li class="sub"><label><input type="radio" name="env"><svg class="ti"><use href="#frame"/></svg>Min Values</label></li>
      <li class="sub"><label><input type="radio" name="env"><svg class="ti"><use href="#frame"/></svg>Max and Min Values</label></li>
      <li><svg class="tw"><use href="#cls"/></svg><label><input type="checkbox"><svg class="ti"><use href="#adj"/></svg>Surface Results Adjustments</label></li>
      <li><svg class="tw"><use href="#cls"/></svg><label><input type="checkbox"><svg class="ti"><use href="#sect"/></svg>Result Sections</label></li>
      <li><svg class="tw"><use href="#cls"/></svg><label><input type="checkbox"><svg class="ti"><use href="#vals"/></svg>Values on Surfaces</label></li>
    </ul>
    <ul class="tree display-tree">
      <li><svg class="tw"><use href="#cls"/></svg><label><input type="checkbox" checked><svg class="ti"><use href="#rxx"/></svg>Result Values</label></li>
      <li><i class="tw"></i><label><input type="checkbox" checked><svg class="ti"><use href="#reye"/></svg>Title Information</label></li>
      <li><i class="tw"></i><label><input type="checkbox" checked><svg class="ti"><use href="#reye"/></svg>Max/Min Information</label></li>
      <li><svg class="tw"><use href="#cls"/></svg><label><input type="checkbox" class="part"><svg class="ti"><use href="#reye"/></svg>Deformation</label></li>
      <li><svg class="tw"><use href="#cls"/></svg><label><input type="checkbox" class="part"><svg class="ti"><use href="#reye"/></svg>Lines</label></li>
      <li><svg class="tw"><use href="#cls"/></svg><label><input type="checkbox" class="part"><svg class="ti"><use href="#reye"/></svg>Surfaces</label></li>
      <li><svg class="tw"><use href="#cls"/></svg><label><input type="checkbox" class="part"><svg class="ti"><use href="#reye"/></svg>Line Welds</label></li>
      <li><svg class="tw"><use href="#cls"/></svg><label><input type="checkbox" class="part"><svg class="ti"><use href="#reye"/></svg>Values on Surfaces</label></li>
      <li><svg class="tw"><use href="#cls"/></svg><label><input type="checkbox" class="part"><svg class="ti"><use href="#iso"/></svg>Type of display</label></li>
      <li><svg class="tw"><use href="#cls"/></svg><label><input type="checkbox" class="part"><svg class="ti"><use href="#reye"/></svg>Support Reactions</label></li>
      <li><svg class="tw"><use href="#cls"/></svg><label><input type="checkbox" class="part"><svg class="ti"><use href="#reye"/></svg>Result Sections</label></li>
    </ul>
    <div class="tabs">
      <button aria-label="Data"><svg><use href="#navdata"/></svg></button>
      <button aria-label="Display"><svg><use href="#bigeye"/></svg></button>
      <button aria-label="Views"><svg><use href="#cam"/></svg></button>
      <button class="cur" aria-label="Results"><svg><use href="#wedge"/></svg></button>
    </div>
  </div>
</aside>

<main class="right">
<section class="view">
  <div class="info">DS1 - ULS (STR/GEO) - Permanent and transient - Eq. 6.10<br>Static Analysis<br>Displacements |u| [mm]</div>
  <canvas class="plot" id="plot" width="1292" height="753"></canvas>
  <svg class="plot" viewBox="307 119 1292 753">
    <path d="M602 263L804 377 970 277 972 310M804 377l2 36 158 89M602 263l27 417 303 173 168-100-1-32M806 413l18 287 5 94M824 700l103 58 54 31 168-100-20-286-165 99 17 287M927 758l5 95" fill="none" stroke="#8b8b8b"/>
    <path d="M985 489l6 104" fill="none" stroke="#7d8a98"/>
    <path d="M602 263L769 162 970 277" fill="none" stroke="#5a5a5a" stroke-width="1.500"/>
    <path d="M602 263l25-27" stroke="#bbb" stroke-dasharray="1 2"/>
    <path d="M599 260h6v5h-6z" fill="#7c2f63"/>
    <text x="603" y="257" class="peak">17.0</text>
  </svg>
  <svg class="axes" viewBox="0 0 100 90">
    <path d="M44 50V20" stroke="#0a0a96" stroke-width="3"/><path d="M44 13l3 9-3 4-3-4z" fill="#0a0a96" stroke="#0a0a96"/>
    <path d="M44 50L20 63" stroke="#f00" stroke-width="3"/><path d="M13 67l5-7 6 1-2 5z" fill="#f00"/>
    <path d="M44 50l24 13" stroke="#0a9a1e" stroke-width="3"/><path d="M76 67l-5-7-6 1 2 5z" fill="#0a9a1e"/>
    <circle cx="44" cy="50" r="4" fill="#e6d800"/>
    <text x="40" y="8" fill="#1a1a9c">Z</text><text x="1" y="77" fill="#f00">X</text><text x="80" y="77" fill="#1cb52c">Y</text>
  </svg>
  <svg class="cube" viewBox="0 0 112 126">
    <path d="M56 1L110 32v64l-54 29L3 96V32z" fill="#a9a9a9"/>
    <path d="M56 1L110 32v64l-54 29L3 96V32zM3 32l53 31 54-31M56 63v62M16 24l54 31M43 9l54 31M70 9L16 40M97 24L43 55M16 40v63M43 55v63M97 40v63M70 55v63M3 48l53 31 54-31M3 80l53 31 54-31" fill="none" stroke="#757575" stroke-width="2"/>
    <g font-size="13" font-weight="700"><text x="50" y="37" fill="#2a2a9a" transform="rotate(-25 56 32)">Z-</text><text x="23" y="84" fill="#e23434" transform="rotate(20 30 80)">-X</text><text x="75" y="82" fill="#2aa83a" transform="rotate(-20 82 78)">-Y</text></g>
  </svg>
  <div class="maxmin">max |u| : 17.0 | min |u| : 3.7 mm</div>

  <section class="cpanel">
    <div class="cptitle"><h2>Control Panel</h2><button aria-label="Close control panel"></button></div>
    <div class="cphead">Global Deformations<br>|u| [mm]</div>
    <div class="cpbody">
      <ol class="vals"><li>17.0</li><li>15.8</li><li>14.6</li><li>13.4</li><li>12.2</li><li>10.9</li><li>9.7</li><li>8.5</li><li>7.3</li><li>6.1</li><li>4.9</li><li>3.7</li></ol>
      <div class="cols"><i class="c10"></i><i class="c9"></i><i class="c8"></i><i class="c7"></i><i class="c6"></i><i class="c5"></i><i class="c4"></i><i class="c3"></i><i class="c2"></i><i class="c1"></i><i class="c0"></i></div>
      <ol class="pct"><li>3.12 %</li><li>11.49 %</li><li>7.35 %</li><li>7.47 %</li><li>6.84 %</li><li>6.71 %</li><li>7.25 %</li><li>8.49 %</li><li>20.01 %</li><li>14.51 %</li><li>6.77 %</li></ol>
      <div class="range"><input type="range" aria-label="Upper limit" value="100"><input type="range" aria-label="Lower limit" value="0"></div>
    </div>
    <div class="cpfoot"><button aria-label="Legend settings"><svg><use href="#cpset"/></svg></button><button class="sel" aria-label="Value range"><svg><use href="#cprange"/></svg></button></div>
    <div class="tabs"><button class="cur" aria-label="Legend"><svg><use href="#legend"/></svg></button><button aria-label="Factors"><svg><use href="#scales"/></svg></button><button aria-label="Probe"><svg><use href="#probe"/></svg></button></div>
  </section>
</section>

<section class="summary">
  <div class="phead"><h2>Summary</h2><button class="mini" aria-label="Float summary"><svg><use href="#restore"/></svg></button><button class="mini" aria-label="Close summary"><svg><use href="#x"/></svg></button></div>
  <nav class="menubar sm"><button>Go To</button><button>Edit</button><button>Selection</button><button>View</button><button>Settings</button></nav>
  <div class="sbar">
    <div class="combo s1"><svg class="ci"><use href="#static"/></svg><select aria-label="Analysis"><option>Static Analysis</option></select><svg class="chev"><use href="#chev"/></svg></div>
    <button class="step" aria-label="Previous analysis"><svg><use href="#lt"/></svg></button><button class="step" aria-label="Next analysis"><svg><use href="#rt"/></svg></button>
    <i class="sep"></i>
    <div class="combo s2"><svg class="ci"><use href="#static"/></svg><select aria-label="Table"><option>Overview</option></select><svg class="chev"><use href="#chev"/></svg></div>
    <button class="step grey" aria-label="Previous table"><svg><use href="#lt"/></svg></button><button class="step" aria-label="Next table"><svg><use href="#rt"/></svg></button>
    <i class="sep"></i>
    <div class="combo ds s3"><span class="uls">ULS</span><span class="ds1">DS1</span><select aria-label="Summary design situation"><option>ULS (STR/GEO) - Perma...</option></select><svg class="chev"><use href="#chev"/></svg></div>
    <button class="step grey" aria-label="Previous situation"><svg><use href="#lt"/></svg></button><button class="step" aria-label="Next situation"><svg><use href="#rt"/></svg></button>
    <i class="sep"></i>
    <button class="tb on" aria-label="Sync selection"><svg><use href="#sync1"/></svg></button>
    <button class="tb on" aria-label="Sync view"><svg><use href="#sync2"/></svg></button>
    <i class="sep"></i>
    <button class="tb on" aria-label="Results on"><svg><use href="#reye"/></svg></button>
    <button class="tb on" aria-label="Values on"><svg><use href="#rxx"/></svg></button>
    <i class="sep"></i>
    <button class="tb" aria-label="Color rows"><svg><use href="#tbl1"/></svg></button>
    <button class="tb" aria-label="Insert rows"><svg><use href="#tbl2"/></svg></button>
    <button class="tb" aria-label="Delete rows"><svg><use href="#tbl2"/></svg></button>
    <i class="sep"></i>
    <button class="tb" aria-label="Relations"><svg><use href="#bars"/></svg></button>
    <i class="sep"></i>
    <button class="tb" aria-label="Columns"><svg><use href="#tbl3"/></svg></button>
    <i class="sep"></i>
    <button class="tb" aria-label="Export to Excel"><svg><use href="#xls"/></svg></button>
    <i class="sep"></i>
    <button class="tb" aria-label="Table filter"><svg><use href="#filter"/></svg></button>
    <i class="sep"></i>
    <button class="more" aria-label="More table tools">»</button>
  </div>
  <div class="twrap">
  <table>
    <colgroup><col class="k0"><col class="k1"><col class="k2"><col class="k3"><col></colgroup>
    <thead>
      <tr class="strip"><td></td><td></td><td></td><td></td><td></td></tr>
      <tr><td class="corner"></td><th>Description</th><th>Value</th><th>Unit</th><th>Notes</th></tr>
    </thead>
    <tbody>
      <tr class="cat"><td colspan="5">Maximum deformations</td></tr>
      <tr><td class="corner"></td><td>Maximum displacement in X-direction</td><td>15.6</td><td>mm</td><td>FE node No. 919: (0.000, -4.518, 4.190 m) | CO6</td></tr>
      <tr><td class="corner"></td><td>Maximum displacement in Y-direction</td><td>1.5</td><td>mm</td><td>FE node No. 923: (0.000, -4.763, -1.265 m) | CO3</td></tr>
      <tr><td class="corner"></td><td>Maximum displacement in Z-direction</td><td>-14.5</td><td>mm</td><td>FE node No. 73: (2.450, -5.255, 4.190 m) | CO9</td></tr>
      <tr><td class="corner"></td><td>Maximum vectorial displacement</td><td>17.0</td><td>mm</td><td>FE node No. 73: (2.450, -5.255, 4.190 m) | CO3</td></tr>
      <tr><td class="corner"></td><td>Maximum rotation about X-axis</td><td>0.4</td><td>mrad</td><td>FE node No. 1504: (1.247, -4.786, -1.265 m) | CO8</td></tr>
      <tr><td class="corner"></td><td>Maximum rotation about Y-axis</td><td>3.5</td><td>mrad</td><td>FE node No. 32: (2.450, 0.000, 3.725 m) | CO1</td></tr>
      <tr><td class="corner"></td><td>Maximum rotation about Z-axis</td><td>-0.7</td><td>mrad</td><td>FE node No. 327: (2.450, -5.255, 0.967 m) | CO4</td></tr>
    </tbody>
  </table>
  </div>
  <div class="pager">
    <button aria-label="First page"><svg><use href="#first"/></svg></button><button aria-label="Previous page"><svg class="nar"><use href="#lt"/></svg></button>
    <span>1 of 1</span>
    <button aria-label="Next page"><svg class="nar"><use href="#rt"/></svg></button><button aria-label="Last page"><svg><use href="#last"/></svg></button>
    <button class="sheet">Summary</button>
  </div>
</section>
</main>
</div>

<footer class="status">
  <div class="toggles"><button class="dn">SNAP</button><button>GRID</button><button class="dn">LGRID</button><button class="dn">GLINES</button><button class="dn">OSNAP</button></div>
  <span class="f1"></span><span class="f2">CS: Global XYZ</span><span class="f3">Plane: XY</span><span class="f4">X: -6.665 m</span><span class="f4">Y: -0.549 m</span><span class="f4">Z: 0.000 m</span><span class="f5"><svg viewBox="0 0 10 10"><path d="M8 0h2v2H8zM4 4h2v2H4zM8 4h2v2H8zM0 8h2v2H0zM4 8h2v2H4zM8 8h2v2H8z" fill="#b0b0b0"/></svg></span>
</footer>
</div>
<script src="plot.js"></script>
</body>
</html>
```
FILE: styles.css
```css
* { box-sizing: border-box; }
html, body { height: 100%; margin: 0; }
body { font: 12px/16px "Noto Sans", "Open Sans", sans-serif; color: #111; background: #f7f7f7; }
button, select, input { font: inherit; color: inherit; margin: 0; padding: 0; border: 0; background: none; }
h1, h2, ul, ol { margin: 0; padding: 0; font: inherit; list-style: none; }
.defs { position: absolute; width: 0; height: 0; }
.app { display: flex; flex-direction: column; min-height: 100vh; border: 1px solid #0f7bd4; border-top: 0; }

.titlebar { display: flex; align-items: center; height: 34px; background: #0078d7; color: #fff; padding-left: 6px; }
.titlebar h1 { flex: 1; }
.app-logo { width: 20px; height: 20px; margin-right: 6px; }
.wbtn { width: 51px; height: 34px; display: grid; place-items: center; }
.wbtn svg { width: 12px; height: 12px; }

.menubar { display: flex; align-items: center; height: 23px; background: #f7f7f7; }
.menubar button { padding: 0 9px; }
.bridge { width: 18px; height: 14px; margin-right: 1px; }
.company { margin-left: auto; padding-right: 9px; }
.mini { width: 20px; height: 20px; display: grid; place-items: center; }
.menubar .mini { padding: 0; }
.mini svg { width: 10px; height: 10px; }

.bar { display: flex; height: 31px; padding-left: 1px; background: #f9f9f9; border-top: 1px solid #e6e6e6; }
.grp { display: flex; align-items: center; gap: 2px; padding: 0 1px; border-right: 1px solid #dcdcdc; }
.grp.wide { padding-right: 10px; }
.grp.last { flex: 1; border: 0; }
.grp.last .more { margin-left: auto; }
.grip { width: 7px; height: 20px; background: radial-gradient(circle at 4px 2px, #aaa 1px, transparent 2px) 0 0 / 7px 4px; }
.tb { width: 27px; height: 27px; display: grid; place-items: center; flex: none; }
.tb svg { width: 21px; height: 21px; overflow: visible; }
.tb.on { background: #cce8ff; border: 1px solid #99d1ff; }
.dd { width: 14px; height: 24px; margin-left: -4px; display: grid; place-items: center; }
.dd svg { width: 8px; height: 5px; }
.dd.dim { color: #777; }
.sep { width: 1px; height: 22px; margin: 0 3px; background: #d4d4d4; }
.tight .sep { margin: 0 2px; }
.more { width: 14px; font-size: 14px; text-align: center; color: #444; }

.combo { display: flex; align-items: center; height: 24px; padding: 0 6px; background: #e6e6f4; min-width: 0; }
.combo select { appearance: none; flex: 1; min-width: 0; outline: 0; opacity: 1; }
.chev { width: 9px; height: 6px; color: #555; }
.ci { width: 18px; height: 18px; margin-right: 4px; }
.bar .ds { width: 298px; margin-left: 4px; }
.uls { background: #cd5c5c; color: #fff; padding: 0 5px; margin-right: 6px; }
.ds1 { width: 70px; margin-right: 8px; border-right: 1px solid #f4f4fb; line-height: 24px; }
.step { width: 17px; height: 24px; background: #e6e6f4; display: grid; place-items: center; flex: none; }
.step svg { width: 5px; height: 8px; }
.step.grey { background: #cbcbcb; color: #555; }
.cs { width: 134px; }
.swatch { width: 13px; height: 13px; margin-right: 6px; background: #ccffff; }

.work { flex: 1; display: flex; gap: 5px; }
.navigator { width: 301px; flex: none; display: flex; flex-direction: column; padding-bottom: 2px; }
.phead { display: flex; align-items: center; gap: 4px; height: 24px; padding: 0 2px 0 7px; background: #dae6f4; color: #444; font-weight: 600; }
.phead h2 { flex: 1; }
.navbody { flex: 1; display: flex; flex-direction: column; margin-left: 3px; border: 1px solid #c9c9d2; border-top-width: 2px; }
.navsel { display: flex; gap: 1px; padding: 3px 2px 11px 2px; }
.navsel .combo { flex: 1; }
.off { background: #e3e3e3; color: #8b8b8b; }
.navsel .step { color: #555; background: #d6d6d6; }
.off .ci { filter: grayscale(1); opacity: .7; }
.off .chev { color: #bbb; }
.tree { background: #fff; padding: 0 0 0 3px; margin: 0 2px; }
.main-tree { flex: 1; }
.display-tree { margin-top: 5px; padding-top: 2px; padding-bottom: 12px; }
.tree li { display: flex; align-items: center; height: 20px; }
.tree .sub { padding-left: 40px; }
.tw { width: 10px; height: 10px; margin-right: 8px; }
.tree label { display: flex; align-items: center; gap: 5px; }
.tree input { appearance: none; width: 15px; height: 15px; border: 1px solid #444; background: #fff; }
.tree input[type=radio] { border-radius: 50%; }
.tree input[type=radio]:checked { background: radial-gradient(circle, #222 4px, #fff 5px); }
.tree input[type=checkbox]:checked::before { content: ""; display: block; width: 9px; height: 5px; margin: 3px 0 0 2px; border: solid #333; border-width: 0 0 1px 1px; transform: rotate(-45deg); }
.tree .part { background: #cce4f7; border-color: #1068b0; }
.ti { width: 18px; height: 18px; }
.tree sub { font-size: 10px; vertical-align: baseline; color: #555; }
.phi { font-family: "Liberation Sans", sans-serif; font-weight: 400; }

.tabs { display: flex; height: 28px; background: #f7f7f7; border-top: 1px solid #c9c9d2; }
.tabs button { width: 42px; height: 26px; display: grid; place-items: center; background: #ebebeb; border: 1px solid #c9c9d2; border-top: 0; border-left: 0; }
.tabs .cur { background: #fff; height: 29px; margin-top: -1px; }
.tabs svg { width: 19px; height: 19px; }

.right { flex: 1; min-width: 0; display: flex; flex-direction: column; gap: 4px; }
.view { position: relative; flex: 1; min-height: 500px; background: #fff; overflow: hidden; }
.info { position: absolute; left: 6px; top: 4px; line-height: 19px; }
.maxmin { position: absolute; left: 6px; bottom: 5px; line-height: 19px; }
.plot { position: absolute; left: 0; top: 0; width: 100%; height: 100%; object-fit: contain; }
.peak { font-size: 12px; fill: #9a2f55; }
.axes { position: absolute; left: 22px; bottom: 45px; width: 100px; height: 90px; overflow: visible; }
.cube { position: absolute; right: 20px; top: 12px; width: 112px; height: 126px; }

.cpanel { position: absolute; right: 50px; top: 179px; width: 223px; background: #fff; border: 1px solid #cfcfd6; box-shadow: 0 2px 8px rgba(0, 0, 0, .3); }
.cptitle { display: flex; justify-content: space-between; align-items: center; height: 34px; padding-left: 9px; color: #8f8f8f; border-bottom: 1px solid #d4d4dc; }
.cptitle button { width: 21px; height: 21px; background: #e4e4e4; margin-top: 4px; }
.cphead { height: 46px; padding: 5px 11px; line-height: 15px; }
.cpbody { display: flex; height: 360px; background: #f6f6f6; }
.vals { width: 58px; padding-top: 5px; text-align: right; line-height: 29px; }
.cols { display: flex; flex-direction: column; gap: 2px; width: 46px; margin: 20px 0 0 14px; }
.cols i { height: 27px; }
.c10 { background: #bf0000; } .c9 { background: #f00; } .c8 { background: #fa0; } .c7 { background: #d0d000; }
.c6 { background: #ff0; } .c5 { background: #0f0; } .c4 { background: #00e68a; } .c3 { background: #00f6f6; }
.c2 { background: #09f; } .c1 { background: #00f; } .c0 { background: #0000aa; }
.pct { width: 57px; padding-top: 19px; text-align: right; line-height: 29px; }
.range { position: relative; width: 24px; height: 331px; margin: 12px 0 0 7px; }
.range::before { content: ""; position: absolute; left: 10px; top: 8px; bottom: 8px; width: 5px; background: #e8e8ea; border: 1px solid #cfcfd4; }
.range input { position: absolute; left: 0; top: 0; appearance: none; writing-mode: vertical-lr; direction: rtl; width: 24px; height: 331px; pointer-events: none; }
.range input::-webkit-slider-thumb { appearance: none; width: 24px; height: 11px; background: #0078d7; pointer-events: auto; }
.cpfoot { display: flex; justify-content: flex-end; gap: 7px; height: 36px; padding: 6px 7px; }
.cpfoot button { width: 28px; height: 24px; background: #cce4f7; display: grid; place-items: center; }
.cpfoot .sel { border: 1px solid #1068b0; }
.cpfoot svg { width: 20px; height: 20px; }

.sm { border-bottom: 1px solid #e6e6e6; }
.sm button { padding: 0 10px 0 9px; }
.sbar { display: flex; align-items: center; gap: 1px; height: 29px; padding-left: 2px; background: #f9f9f9; }
.sbar .tb { margin-right: 1px; }
.s1 { width: 189px; } .s2 { width: 284px; } .s3 { width: 283px; }
.sbar .more { margin-left: auto; }
.twrap { background: #fff; border: 1px solid #c9c9d2; padding-bottom: 4px; margin-left: 1px; }
table { width: 100%; border-collapse: collapse; table-layout: fixed; }
.k0 { width: 67px; } .k1 { width: 388px; } .k2 { width: 89px; } .k3 { width: 89px; }
td, th { height: 18px; padding: 0 4px; font-weight: 400; line-height: 15px; border-right: 1px solid #e2e0e6; border-bottom: 1px solid #e2e0e6; white-space: nowrap; overflow: hidden; }
th { height: 37px; background: #efefef; vertical-align: bottom; padding-bottom: 2px; border-color: #cfcfcf; }
.strip td { height: 10px; background: #e1e1e1; border-color: #fafafa; }
.corner { background: #e2e2e2; border-color: #e2e2e2; }
tbody tr:nth-child(even) { background: #fffdf2; }
tbody tr:nth-child(odd) { background: #fff9e6; }
tbody td:nth-child(3) { text-align: right; }
tbody tr.cat { background: #eaeaea; }
.pager { display: flex; height: 25px; color: #999; }
.pager button { width: 20px; display: grid; place-items: center; }
.pager svg { width: 9px; height: 8px; }
.pager .nar { width: 5px; height: 8px; }
.pager span { color: #111; padding: 4px 14px 0; }
.pager .sheet { width: 70px; margin-left: 1px; background: #fff; border: 1px solid #c9c9d2; border-top: 0; color: #111; }

.status { display: flex; height: 25px; padding-top: 1px; line-height: 24px; }
.toggles { display: flex; gap: 2px; flex: 1; padding-left: 633px; }
.toggles button { padding: 0 4px; height: 22px; }
.toggles .dn { background: #efefef; border: 1px solid #bdbdbd; border-right-color: #e8e8e8; border-bottom: 0; padding: 0 3px; }
.status > span { border-left: 1px solid #cfcfcf; padding-left: 5px; }
.f1 { width: 118px; } .f2 { width: 173px; } .f3 { width: 74px; } .f4 { width: 84px; } .f5 { width: 21px; }
.f5 svg { width: 9px; height: 9px; }
```
FILE: plot.js
```js
// Draws the deformed structure, coloured by displacement.
const plot = document.getElementById('plot').getContext('2d');
plot.translate(-307, -119);

// Colour scale, from the smallest displacement to the largest.
const scale = ['#0000a4', '#0000ff', '#0099ff', '#00f6f6', '#00e68a', '#00ff00',
  '#ffff00', '#d0d000', '#ffaa00', '#ff0000', '#bf0000'];

function outline(points) {
  plot.beginPath();
  points.forEach(([x, y]) => plot.lineTo(x, y));
  plot.closePath();
}

function fill(points, style) {
  outline(points);
  plot.fillStyle = style;
  plot.fill();
}

function ramp(x0, y0, x1, y1, colours) {
  const g = plot.createLinearGradient(x0, y0, x1, y1);
  colours.forEach((c, i) => g.addColorStop(i / (colours.length - 1), c));
  return g;
}

// stations: [x, [y of each scale level, falling from level `top`]]
function contour(points, top, stations) {
  plot.save();
  outline(points);
  plot.clip();
  const xs = points.map(p => p[0]);
  for (let x = Math.floor(Math.min(...xs)); x < Math.max(...xs); x++) {
    let k = 0;
    while (k < stations.length - 2 && x > stations[k + 1][0]) k++;
    const [xa, ya] = stations[k];
    const [xb, yb] = stations[k + 1];
    const t = (x - xa) / (xb - xa);
    const ys = ya.map((y, i) => y + (yb[i] - y) * t);
    const first = ys[0];
    const span = ys[ys.length - 1] - first;
    const g = plot.createLinearGradient(0, first, 0, first + span);
    ys.forEach((y, i) => g.addColorStop(Math.min(1, Math.max(0, (y - first) / span)), scale[top - i]));
    plot.fillStyle = g;
    plot.fillRect(x, 100, 1, 820);
  }
  plot.restore();
}

// Undeformed shape behind the model.
fill([[627, 236], [793, 140], [793, 190], [627, 270]], '#d6d6d6');
fill([[793, 140], [995, 255], [995, 292], [972, 312], [769, 185]],
  ramp(793, 140, 990, 310, ['#cbcbcb', '#c2c2c2', '#c4c4c4', '#b0b0b0']));
fill([[995, 255], [970, 270], [972, 308], [995, 292]], ramp(990, 258, 990, 306, ['#d0d0d0', '#b0b0b0']));
fill([[995, 292], [1153, 382], [1130, 403], [972, 312]], '#aaaaaa');
fill([[1153, 382], [1153, 678], [1149, 689], [1129, 403], [1132, 396]],
  ramp(1130, 0, 1153, 0, ['#777777', '#999999', '#c9c9c9']));

// Walls seen through the open top.
contour([[602, 263], [769, 162], [778, 190], [778, 364], [804, 377]], 10, [
  [675, [242, 284, 318, 346, 374, 401, 431, 467]],
  [775, [171, 198, 230, 258, 288, 314, 344, 378]]]);
contour([[769, 162], [970, 277], [804, 377], [773, 360]], 10, [
  [775, [171, 198, 230, 258, 288, 314, 344, 378]],
  [875, [211, 245, 282, 311, 341, 380, 405, 440]]]);
fill([[627, 236], [829, 352], [829, 362], [804, 377], [627, 278]], 'rgba(120,110,120,.38)');
fill([[829, 352], [961, 272], [970, 277], [829, 362]], 'rgba(150,140,140,.38)');

// Bottom box.
fill([[927, 758], [932, 853], [1100, 753], [1098, 714], [981, 755]],
  ramp(927, 760, 1100, 753, ['#0050ff', '#0028ff', '#0010ff', '#0000d8', '#0000b0', '#0000a0']));

// Inside of the front opening.
contour([[985, 489], [1129, 403], [1149, 689], [985, 620]], 8, [
  [985, [310, 345, 382, 428, 470, 514, 547, 577, 606]],
  [1130, [418, 458, 500, 543, 564, 599, 625, 657, 697]]]);
fill([[964, 502], [985, 489], [991, 593], [981, 693]],
  ramp(0, 505, 0, 693, ['#2f9cb4', '#2f8cc4', '#2c55b4', '#2a30a0', '#3a34b4', '#3838bc']));
fill([[972, 606], [991, 593], [1149, 686], [981, 789]],
  ramp(985, 765, 1080, 660, ['#2f86cc', '#2f82cc', '#3050cc', '#352dc8', '#3a2dc0']));
fill([[972, 606], [991, 593], [991, 601], [973, 612]], '#6a66b0');
fill([[977, 633], [1048, 677], [1041, 686], [977, 652]], '#0a4cf0');
fill([[977, 651], [1042, 688], [981, 715]], '#0000a4');
fill([[981, 699], [998, 688], [1014, 694], [981, 710]], '#2c2890');
fill([[1092, 652], [1093, 658], [1020, 702], [981, 725], [981, 714], [1041, 682]],
  ramp(981, 720, 1093, 654, ['#6a4c98', '#6058a8', '#5a58c0', '#6460bc']));
fill([[985, 776], [1146, 683], [1149, 689], [981, 789]],
  ramp(985, 781, 1149, 686, ['#00a4ff', '#0088ff', '#0030ff', '#0000f0']));
fill([[964, 502], [985, 489], [985, 774], [981, 789]], 'rgba(70,70,90,.28)');

// Front wall.
contour([[602, 263], [804, 377], [806, 413], [964, 502], [981, 789], [927, 758], [932, 853], [629, 680]], 10, [
  [602, [282, 317, 355, 387, 422, 478, 522, 560, 650, 880]],
  [808, [383, 436, 478, 509, 538, 565, 600, 650, 718, 805]],
  [930, [460, 488, 518, 543, 573, 610, 652, 702, 768, 848]],
  [975, [480, 508, 534, 557, 586, 625, 669, 716, 788, 890]]]);

// Roof strip and slab.
fill([[804, 377], [970, 277], [972, 310], [1129, 403], [964, 502], [806, 413]],
  ramp(880, 330, 912, 376, ['#c40000', '#d80000', '#ff0000', '#ff0000']));
fill([[985, 478], [1129, 401], [1129, 403], [985, 490]],
  ramp(985, 485, 1129, 403, ['#ff0000', '#ff0800', '#ff6000']));
fill([[829, 387], [972, 312], [1128, 402], [985, 478], [829, 398]],
  ramp(955, 425, 1045, 335, ['#c42e2f', '#c42e2f', '#c8482e', '#cc5c2e']));
fill([[829, 387], [972, 312], [978, 315], [835, 391], [829, 398]], 'rgba(130,20,20,.3)');
fill([[829, 388], [985, 468], [985, 478], [829, 398]], 'rgba(130,20,20,.3)');
```
